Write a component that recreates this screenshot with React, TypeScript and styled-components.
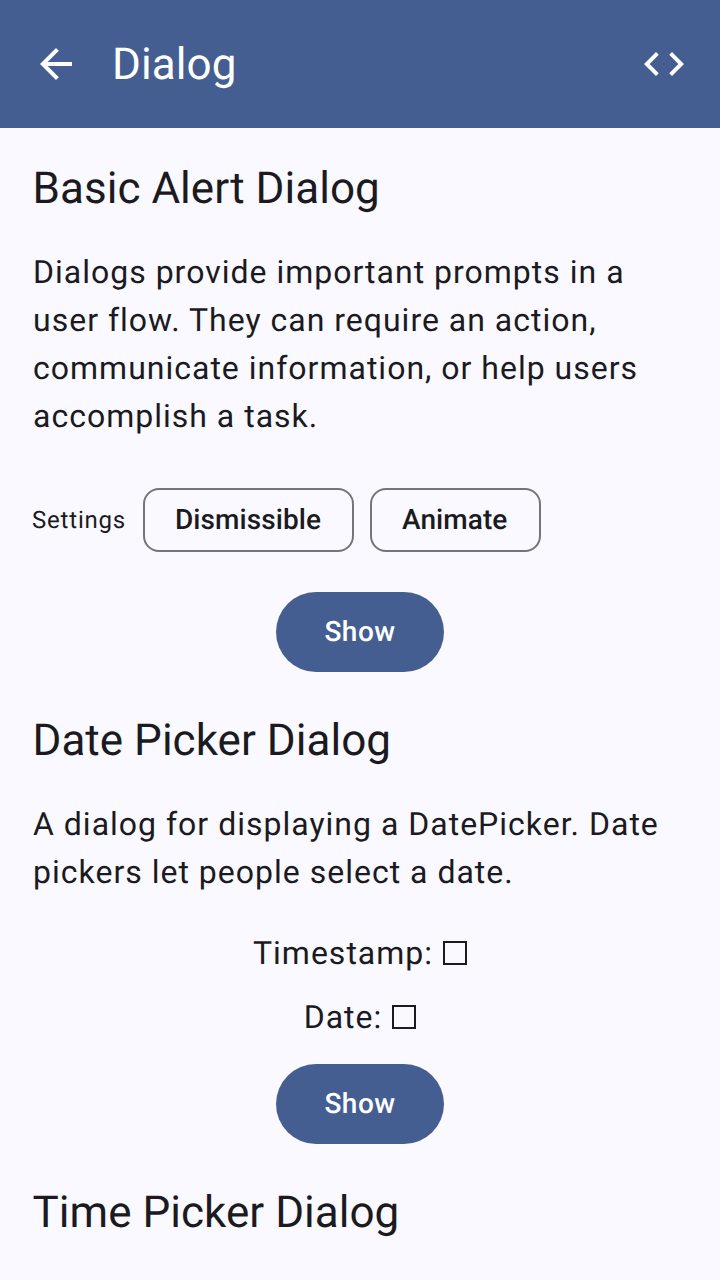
import React from "react";
import styled, { createGlobalStyle } from "styled-components";

const Global = createGlobalStyle`
  * { box-sizing: border-box; }
  html, body { margin: 0; height: 100%; overflow: hidden; background: #faf9ff; }
  body { font-family: Roboto, sans-serif; color: #1b1b1f; text-rendering: geometricPrecision; }
`;
const Screen = styled.div`
  width: 720px; height: 1280px; overflow: hidden; background: #faf9ff;
`;
const AppBar = styled.header`
  height: 128px; padding: 0 32px; display: flex; align-items: center;
  background: #445e91; color: #fff;
`;
const Icon = styled.svg`
  width: 48px; height: 48px; fill: currentColor; flex: none;
`;
const BarTitle = styled.h1`
  margin: 0 auto 0 32px; font-size: 44px; font-weight: 400; line-height: 56px;
  letter-spacing: 0.1px;
`;
const Content = styled.main`
  padding: 32px 32px 0; display: flex; flex-direction: column;
`;
const Heading = styled.h2`
  margin: 0; padding-left: 0.5px; font-size: 44px; font-weight: 400; line-height: 56px;
  letter-spacing: 0.03px; white-space: nowrap;
`;
const Description = styled.p`
  margin: 32px 0 0; padding-left: 1px; font-size: 32px; line-height: 48px; letter-spacing: 1px;
  white-space: pre;
`;
const Settings = styled.div`
  margin-top: 40px; height: 80px; display: flex; align-items: center;
`;
const Label = styled.span`
  width: 111px; font-size: 24px; line-height: 32px; letter-spacing: 0.8px;
`;
const Chip = styled.button<{ $width: number }>`
  width: ${(p) => p.$width}px; height: 64px; margin-right: 16px; padding: 0 0 0 30px;
  border: 2px solid #75747a; border-radius: 16px; background: transparent; color: #1b1b1f;
  font: 500 28px/40px Roboto, sans-serif; letter-spacing: 0.08px; text-align: left;
  text-rendering: inherit;
`;
const ShowButton = styled.button<{ $top: number }>`
  align-self: center; width: 168px; height: 80px; margin: ${(p) => p.$top}px 0 40px; padding: 0;
  border: 0; border-radius: 40px; background: #445e91; color: #fff;
  font: 500 28px/40px Roboto, sans-serif; letter-spacing: 0.5px; text-rendering: inherit;
`;
const Values = styled.div`
  padding-top: 25px; display: flex; flex-direction: column; align-items: center;
`;
const Value = styled.div`
  height: 64px; display: flex; align-items: center; gap: 10px;
  font-size: 32px; line-height: 48px; letter-spacing: 1px;
`;
const EmptyBox = styled.span`
  width: 24px; height: 24px; border: 2px solid #1b1b1f;
`;

export default function App() {
  return (
    <Screen>
      <Global />
      <AppBar>
        <Icon viewBox="0 0 24 24"><path d="M20 11H7.83l5.59-5.59L12 4l-8 8 8 8 1.41-1.41L7.83 13H20v-2z" /></Icon>
        <BarTitle>Dialog</BarTitle>
        <Icon viewBox="0 0 24 24"><path d="M9.4 16.6L4.8 12l4.6-4.6L8 6l-6 6 6 6 1.4-1.4zm5.2 0l4.6-4.6-4.6-4.6L16 6l6 6-6 6-1.4-1.4z" /></Icon>
      </AppBar>
      <Content>
        <Heading>Basic Alert Dialog</Heading>
        <Description>{"Dialogs provide important prompts in a\nuser flow. They can require an action,\ncommunicate information, or help users\naccomplish a task."}</Description>
        <Settings>
          <Label>Settings</Label>
          <Chip $width={211}>Dismissible</Chip>
          <Chip $width={171}>Animate</Chip>
        </Settings>
        <ShowButton $top={32}>Show</ShowButton>
        <Heading>Date Picker Dialog</Heading>
        <Description>{"A dialog for displaying a DatePicker. Date\npickers let people select a date."}</Description>
        <Values>
          <Value>Timestamp: <EmptyBox /></Value>
          <Value>Date: <EmptyBox /></Value>
        </Values>
        <ShowButton $top={15}>Show</ShowButton>
        <Heading>Time Picker Dialog</Heading>
      </Content>
    </Screen>
  );
}
